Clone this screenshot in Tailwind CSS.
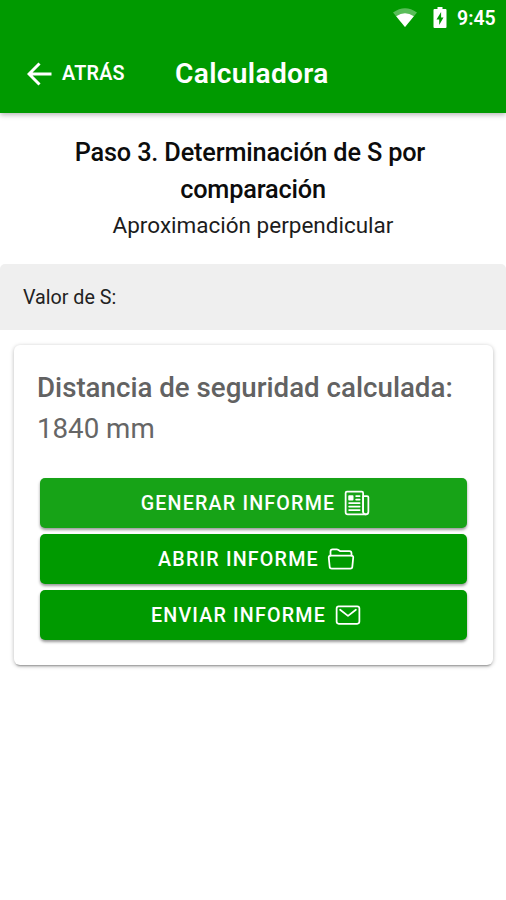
<!DOCTYPE html>
<html lang="es">
<head>
<meta charset="utf-8">
<title>Calculadora</title>
<script src="https://cdn.jsdelivr.net/npm/@tailwindcss/browser@4"></script>
</head>
<body class="w-[506px] h-[900px] overflow-hidden bg-white font-[Roboto,sans-serif] text-black">
<header class="relative h-[113px] bg-[#009a00] text-white shadow-[0_2px_5px_rgba(0,0,0,0.28)]">
  <div class="flex h-[36px] items-center justify-end pr-[11px]">
    <svg class="mb-px h-[19px] w-[24px]" viewBox="0 0 24 19"><path d="M0 4.5Q12-4 24 4.5L12 19Z" fill="#fff" fill-opacity=".35"/><path d="M3.2 8.3Q12 2 20.8 8.3L12 19Z" fill="#fff"/></svg>
    <svg class="mb-[2px] ml-[16px] h-[21px] w-[14px]" viewBox="0 0 13 21"><path d="M4 0h5v2h3a1 1 0 011 1v17a1 1 0 01-1 1H1a1 1 0 01-1-1V3a1 1 0 011-1h3z" fill="#fff"/><path d="M7.6 5L3 12.500h2.700V18L10 10.500H7.600z" fill="#009a00"/></svg>
    <span class="ml-[10px] w-[38px] pt-px whitespace-nowrap text-[19.5px] leading-[36px] font-semibold">9:45</span>
  </div>
  <div class="flex h-[77px] items-center pl-[27px]">
    <svg class="mb-[2px] h-[24px] w-[25px]" viewBox="0 0 25 24" fill="none" stroke="#fff" stroke-width="3"><path d="M24.500 12H2.500M12.500 1.500L2 12l10.500 10.500"/></svg>
    <span class="mb-[2px] ml-[10px] w-[113px] text-[19.7px] font-semibold tracking-[0.2px]">ATRÁS</span>
    <h1 class="text-[28.1px] font-semibold tracking-[0.35px]">Calculadora</h1>
  </div>
</header>
<main>
  <section class="h-[151px] pt-[21px] text-center">
    <h2 class="text-[25.3px] leading-[37px] font-medium tracking-[-0.18px] text-[#0c0c0c]">Paso 3. Determinación de S por&nbsp;<br>comparación</h2>
    <p class="text-[22.5px] leading-[34px] text-[#1c1c1c]">Aproximación perpendicular</p>
  </section>
  <div class="flex h-[66px] items-center rounded-t-[5px] bg-[#efefef] pt-[2px] pl-[23px] text-[19.7px] text-[#222]">Valor de S:</div>
  <section class="mr-[13px] ml-[14px] mt-[15px] h-[320px] rounded-[6px] bg-white px-[24px] pt-[22px] shadow-[0_3px_2px_-2px_rgba(0,0,0,0.3),0_1px_4px_rgba(0,0,0,0.28)]">
    <h3 class="-ml-px text-[27.7px] leading-[41px] font-medium whitespace-nowrap text-[#626262]">Distancia de seguridad calculada:</h3>
    <p class="-ml-px text-[27.7px] leading-[41px] text-[#666]">1840 mm</p>
    <div class="mx-[2px] mt-[29px] flex flex-col gap-[6px] text-[19.7px] font-medium tracking-[1.18px] text-white">
      <button class="flex h-[50px] items-center justify-center rounded-[5px] bg-[#17a317] pt-px pl-[5px] shadow-[0_2px_3px_rgba(0,0,0,0.4)]">GENERAR INFORME
        <svg class="mb-px ml-[8px] size-[28px]" viewBox="0 0 512 512" fill="none" stroke="#fff" stroke-width="32" stroke-linecap="round" stroke-linejoin="round"><path d="M368 415.860V72a24 24 0 00-24-24H72a24 24 0 00-24 24v352a40 40 0 0040 40h328"/><path d="M416 464a48 48 0 01-48-48V128h72a24 24 0 0124 24v264a48 48 0 01-48 48zM240 128h64M240 192h64M112 256h192M112 320h192M112 384h192"/><path fill="#fff" stroke="none" d="M176 208h-64a16 16 0 01-16-16v-64a16 16 0 0116-16h64a16 16 0 0116 16v64a16 16 0 01-16 16z"/></svg></button>
      <button class="flex h-[50px] items-center justify-center rounded-[5px] bg-[#009a00] pt-px pl-[6px] shadow-[0_2px_3px_rgba(0,0,0,0.4)]">ABRIR INFORME
        <svg class="mb-px ml-[8px] size-[28px]" viewBox="0 0 512 512" fill="none" stroke="#fff" stroke-width="32" stroke-linecap="round" stroke-linejoin="round"><path d="M64 192v-72a40 40 0 0140-40h75.890a40 40 0 0122.190 6.720l27.840 18.560a40 40 0 0022.190 6.720H408a40 40 0 0140 40v40"/><path d="M479.900 226.550L463.680 392a40 40 0 01-39.930 40H88.250a40 40 0 01-39.930-40L32.100 226.550A32 32 0 0164 192h384.100a32 32 0 0131.800 34.550z"/></svg></button>
      <button class="flex h-[50px] items-center justify-center rounded-[5px] bg-[#009a00] pt-px pl-[6px] shadow-[0_2px_3px_rgba(0,0,0,0.4)]">ENVIAR INFORME
        <svg class="mb-px ml-[8px] size-[28px]" viewBox="0 0 512 512" fill="none" stroke="#fff" stroke-width="32" stroke-linecap="round" stroke-linejoin="round"><rect x="48" y="96" width="416" height="320" rx="40"/><path d="M112 160l144 112 144-112"/></svg></button>
    </div>
  </section>
</main>
</body>
</html>
